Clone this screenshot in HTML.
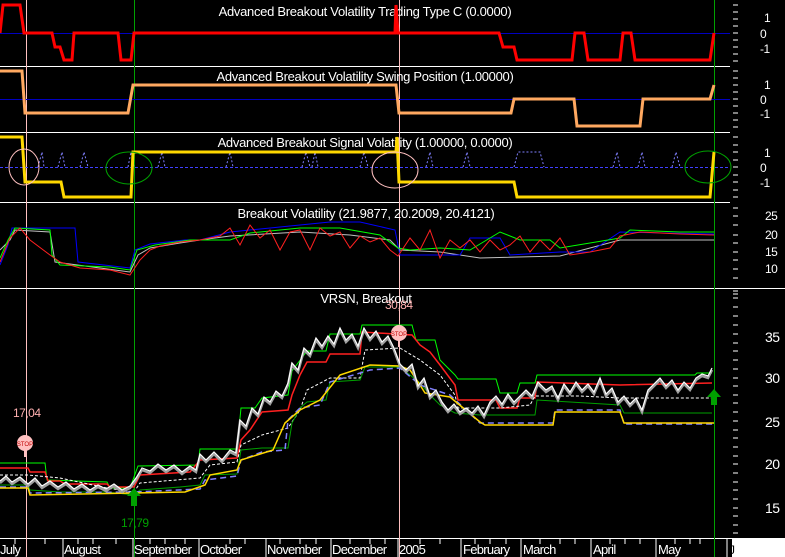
<!DOCTYPE html>
<html><head><style>
html,body{margin:0;padding:0;background:#000;}
svg{display:block;}
text{font-family:"Liberation Sans",sans-serif;}
</style></head><body>
<svg width="785" height="557" viewBox="0 0 785 557" xmlns="http://www.w3.org/2000/svg">
<rect width="785" height="557" fill="#000"/>
<g stroke="#fff" stroke-width="1">
<line x1="0" y1="66.5" x2="730" y2="66.5"/>
<line x1="0" y1="132.5" x2="730" y2="132.5"/>
<line x1="0" y1="202.5" x2="730" y2="202.5"/>
<line x1="0" y1="288.5" x2="785" y2="288.5"/>
<line x1="0" y1="538.5" x2="785" y2="538.5"/>
</g>
<line x1="26.5" y1="0" x2="26.5" y2="557" stroke="#ffc0c0"/>
<line x1="134.5" y1="0" x2="134.5" y2="557" stroke="#00a000"/>
<line x1="399.5" y1="0" x2="399.5" y2="557" stroke="#ffc0c0"/>
<line x1="714.5" y1="0" x2="714.5" y2="557" stroke="#00a000"/>
<line x1="0" y1="33.5" x2="730" y2="33.5" stroke="#0000c0"/>
<line x1="0" y1="99.5" x2="730" y2="99.5" stroke="#0000c0"/>
<line x1="0" y1="167.5" x2="730" y2="167.5" stroke="#4040ff" stroke-dasharray="3,2"/>
<g fill="#fff" font-size="13" text-anchor="middle" letter-spacing="-0.3">
<text x="365" y="16">Advanced Breakout Volatility Trading Type C (0.0000)</text>
<text x="365" y="81">Advanced Breakout Volatility Swing Position (1.00000)</text>
<text x="365" y="147">Advanced Breakout Signal Volatility (1.00000, 0.0000)</text>
<text x="366" y="218">Breakout Volatility (21.9877, 20.2009, 20.4121)</text>
<text x="366" y="303">VRSN, Breakout</text>
</g>
<polyline fill="none" stroke="#ff0000" stroke-width="3" points="0,33 3,5 20,5 24,33 52,33 55,47 60,47 64,60 72,60 74,33 118,33 121,60 131,60 134,33 395,33 396,5 398,33 499,33 503,47 514,47 517,60 572,60 575,33 584,33 588,60 620,60 623,33 631,33 635,60 710,60 714,33"/>
<polyline fill="none" stroke="#ffa860" stroke-width="3" points="0,71 22,71 25,113 128,113 133,85 396,85 399,113 511,113 514,99 574,99 577,126 640,126 643,99 710,99 714,85"/>
<g fill="none" stroke="#8080ff" stroke-dasharray="2,2" stroke-width="1">
<path d="M38,167 L42,152 L44,167 M58,167 L62,152 L65,167 M80,167 L84,152 L88,167 M128,167 L131,152 L134,167 M158,167 L162,152 L165,167 M226,167 L230,152 L233,167 M302,167 L306,152 L310,167 M312,167 L315,152 L318,167 M360,167 L364,152 L368,167 M426,167 L430,152 L433,167 M463,167 L467,152 L470,167 M514,167 L518,152 L540,152 L544,167 M613,167 L617,152 L620,167 M638,167 L642,152 L645,167 M672,167 L676,152 L680,167"/>
</g>
<polyline fill="none" stroke="#ffd800" stroke-width="3" points="0,137 22,137 25,182 61,182 64,197 131,197 133,152 396,152 397,137 399,182 514,182 517,197 710,197 714,152"/>
<g fill="none" stroke-width="1">
<ellipse cx="24" cy="167" rx="15" ry="18" stroke="#ffc0c0"/>
<ellipse cx="129" cy="168" rx="23" ry="16" stroke="#00a000"/>
<ellipse cx="395" cy="170" rx="23" ry="18" stroke="#ffc0c0"/>
<ellipse cx="708" cy="167" rx="23" ry="16" stroke="#00a000"/>
</g>
<g fill="none" stroke-width="1">
<polyline stroke="#c0c0c0" points="0,250 10,240 15,230 50,232 55,262 100,268 130,272 138,255 150,248 180,243 200,240 230,236 300,232 350,235 390,240 400,250 440,252 480,258 560,256 620,240 714,240"/>
<polyline stroke="#0000ff" points="0,265 8,245 12,228 75,228 78,262 130,268 135,250 150,244 185,240 200,240 230,232 290,226 330,222 360,222 395,230 400,255 460,255 470,238 500,238 510,255 560,252 590,252 620,232 714,234"/>
<polyline stroke="#00ff00" points="0,258 8,240 15,228 50,230 52,255 60,265 110,267 130,270 137,250 155,245 190,240 230,240 250,233 300,228 340,228 380,235 398,248 410,250 440,248 470,250 500,232 520,240 550,240 560,248 620,238 630,230 680,232 714,232"/>
<polyline stroke="#ff2020" points="0,262 10,238 20,228 30,240 50,255 60,262 80,268 110,270 130,275 140,260 150,250 160,246 180,242 200,240 220,236 230,228 240,245 250,225 260,238 270,230 280,250 290,232 300,230 310,250 320,228 330,236 340,232 350,248 360,236 370,242 380,238 390,250 398,256 410,238 420,250 430,230 440,258 450,240 460,248 470,240 480,252 490,240 500,250 510,245 520,236 530,252 540,240 550,250 560,238 570,255 590,252 610,248 620,236 640,232 680,234 714,235"/>
</g>
<g fill="none">
<polyline stroke="#00ff00" stroke-width="1" points="0,463 45,463 47,480 107,482 110,488 130,488 138,466 198,465 200,449 237,449 241,408 255,408 262,398 288,395 292,371 307,351 326,351 330,334 360,334 362,325 412,325 416,340 435,340 440,360 455,375 458,379 496,379 500,393 517,393 520,383 535,383 537,375 695,375 697,373 712,373"/>
<polyline stroke="#ff2020" stroke-width="1.5" points="0,468 28,468 30,472 45,472 48,481 60,481 65,484 107,484 110,487 134,487 140,475 190,472 200,460 237,458 241,440 250,430 262,412 288,410 292,395 300,375 307,362 326,362 330,354 360,354 362,332 412,335 420,345 430,352 440,365 455,385 458,400 496,400 500,408 517,408 520,398 535,398 537,382 620,385 712,383"/>
<polyline stroke="#ffffff" stroke-width="1" stroke-dasharray="3,2" points="0,475 28,475 60,478 107,488 134,492 140,483 200,478 210,465 237,462 241,445 262,435 288,428 300,410 307,390 330,378 360,378 365,350 400,348 420,360 440,375 455,395 458,408 500,408 530,405 535,396 580,396 620,398 712,398"/>
<polyline stroke="#00a000" stroke-width="1" points="0,485 28,485 30,490 60,492 107,492 134,495 140,490 180,487 200,485 205,475 237,474 241,450 262,448 288,448 292,423 300,408 307,402 326,400 330,382 360,380 365,367 400,367 420,383 430,395 440,405 455,413 480,415 535,415 537,400 620,405 624,413 712,413"/>
<polyline stroke="#8080ff" stroke-width="1.5" stroke-dasharray="6,4" points="0,487 28,487 30,493 134,492 200,489 205,480 237,476 241,460 262,452 285,450 288,420 300,408 320,405 330,382 370,370 400,368 420,385 450,395 480,423 553,423 555,410 620,410 624,424 714,424"/>
<polyline stroke="#ffd800" stroke-width="1.5" points="0,488 28,488 30,495 134,493 185,492 205,485 210,475 237,470 241,460 273,450 285,423 300,410 320,400 340,375 370,365 400,366 410,370 420,385 425,393 450,397 480,422 485,425 553,425 555,412 620,412 624,423 714,423"/>
</g>
<polyline fill="none" stroke="#a0a0a0" stroke-width="2.5" points="0,483 6,478 12,484 20,479 28,486 35,480 42,488 50,483 58,489 66,484 74,491 82,486 90,492 98,487 106,491 114,486 122,492 130,488 136,480 142,470 150,473 158,466 166,472 174,467 182,474 190,468 196,472 200,456 206,462 214,454 222,462 230,452 236,455 240,422 246,428 252,410 258,416 264,399 270,404 276,393 282,398 288,385 292,365 298,372 304,350 310,356 316,340 322,348 328,338 334,346 340,330 346,342 352,336 358,348 364,330 370,340 376,333 382,344 388,338 394,350 400,366 406,372 412,366 418,388 424,380 430,398 436,392 442,404 448,412 454,406 460,414 466,410 472,415 478,408 484,417 490,404 496,398 502,406 508,396 514,404 520,398 526,392 532,398 538,384 546,392 552,388 558,400 564,386 570,394 576,384 582,392 588,386 594,394 600,380 606,396 612,390 618,404 624,398 630,406 636,400 642,412 648,392 654,386 660,380 666,388 672,382 678,392 684,384 690,390 696,380 702,376 708,378 712,370"/>
<polyline fill="none" stroke="#ffffff" stroke-width="1.2" points="0,481 6,476 12,482 20,477 28,484 35,478 42,486 50,481 58,487 66,482 74,489 82,484 90,490 98,485 106,489 114,484 122,490 130,486 136,478 142,468 150,471 158,464 166,470 174,465 182,472 190,466 196,470 200,454 206,460 214,452 222,460 230,450 236,453 240,420 246,426 252,408 258,414 264,397 270,402 276,391 282,396 288,383 292,363 298,370 304,348 310,354 316,338 322,346 328,336 334,344 340,328 346,340 352,334 358,346 364,328 370,338 376,331 382,342 388,336 394,348 400,364 406,370 412,364 418,386 424,378 430,396 436,390 442,402 448,410 454,404 460,412 466,408 472,413 478,406 484,415 490,402 496,396 502,404 508,394 514,402 520,396 526,390 532,396 538,382 546,390 552,386 558,398 564,384 570,392 576,382 582,390 588,384 594,392 600,378 606,394 612,388 618,402 624,396 630,404 636,398 642,410 648,390 654,384 660,378 666,386 672,380 678,390 684,382 690,388 696,378 702,374 708,376 712,368"/>
<g font-size="12" letter-spacing="-0.5">
<text x="13" y="417" fill="#ffb0b0">17,04</text>
<text x="121" y="527" fill="#00a000">17,79</text>
<text x="385" y="309" fill="#ffb0b0">30,84</text>
</g>
<g>
<line x1="25" y1="450" x2="25" y2="457" stroke="#ffc0c0" stroke-width="2"/>
<circle cx="25" cy="443" r="8" fill="#ffc0c0"/>
<text x="25" y="446" font-size="6" fill="#c00000" text-anchor="middle">STOP</text>
<line x1="399" y1="340" x2="399" y2="347" stroke="#ffc0c0" stroke-width="2"/>
<circle cx="399" cy="333" r="8" fill="#ffc0c0"/>
<text x="399" y="336" font-size="6" fill="#c00000" text-anchor="middle">STOP</text>
</g>
<g fill="#00a000">
<path d="M134,488 L141,496 L137,496 L137,506 L131,506 L131,496 L127,496 Z"/>
<path d="M714,389 L721,397 L717,397 L717,405 L711,405 L711,397 L707,397 Z"/>
</g>
<g stroke="#fff" stroke-width="1">
<path d="M733,5h5M733,12h5M733,19h5M733,26h5M733,33h5M733,40h5M733,47h5M733,54h5M733,61h5M733,71h5M733,78h5M733,85h5M733,92h5M733,99h5M733,106h5M733,113h5M733,120h5M733,127h5M733,137h5M733,145h5M733,152h5M733,160h5M733,167h5M733,175h5M733,182h5M733,190h5M733,197h5M733,208h5M733,216h5M733,225h5M733,235h5M733,243h5M733,252h5M733,260h5M733,269h5M733,278h5M733,291h5M733,294h5M733,298h5M733,307h5M733,316h5M733,325h5M733,334h5M733,343h5M733,351h5M733,360h5M733,369h5M733,378h5M733,386h5M733,395h5M733,403h5M733,412h5M733,421h5M733,430h5M733,438h5M733,447h5M733,456h5M733,464h5M733,473h5M733,482h5M733,490h5M733,499h5M733,508h5M733,516h5M733,525h5M733,533h5"/>
</g>
<g fill="#fff" font-size="12" letter-spacing="-0.5">
<text x="764" y="22">1</text><text x="760" y="38">0</text><text x="760" y="53">-1</text>
<text x="764" y="89">1</text><text x="760" y="104">0</text><text x="760" y="118">-1</text>
<text x="764" y="157">1</text><text x="760" y="172">0</text><text x="760" y="187">-1</text>
<text x="765" y="220">25</text><text x="765" y="239">20</text><text x="765" y="256">15</text><text x="765" y="273">10</text>
</g>
<g fill="#fff" font-size="14" letter-spacing="-0.5">
<text x="765" y="342">35</text><text x="765" y="383">30</text><text x="765" y="427">25</text><text x="765" y="469">20</text><text x="765" y="513">15</text>
</g>
<rect x="732" y="539" width="53" height="18" fill="#fff"/>
<g stroke="#fff">
<path d="M15,539v5M45,539v5M63,539v18M78,539v5M93,539v5M116,539v5M133,539v18M150,539v5M165,539v5M185,539v5M199,539v18M230,539v5M245,539v5M266,539v18M280,539v5M300,539v5M316,539v5M331,539v18M350,539v5M370,539v5M385,539v5M398,539v18M420,539v5M440,539v5M461,539v18M475,539v5M490,539v5M506,539v5M521,539v18M540,539v5M560,539v5M575,539v5M591,539v18M610,539v5M625,539v5M640,539v5M656,539v18M675,539v5M690,539v5M700,539v5M727,539v18"/>
</g>
<g fill="#fff" font-size="13" letter-spacing="-0.7">
<text x="0" y="554">July</text>
<text x="64" y="554">August</text>
<text x="134" y="554">September</text>
<text x="200" y="554">October</text>
<text x="267" y="554">November</text>
<text x="332" y="554">December</text>
<text x="399" y="554">2005</text>
<text x="463" y="554">February</text>
<text x="523" y="554">March</text>
<text x="593" y="554">April</text>
<text x="658" y="554">May</text>
</g>
<text x="729" y="554" fill="#000" font-size="12">J</text>
</svg>
</body></html>
